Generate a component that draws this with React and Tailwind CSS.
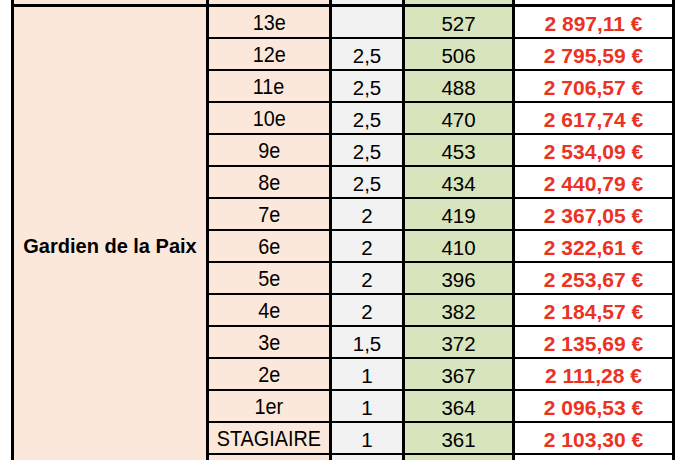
import React from "react";

const rows = [
  ["13e", "", "527", "2 897,11 €"],
  ["12e", "2,5", "506", "2 795,59 €"],
  ["11e", "2,5", "488", "2 706,57 €"],
  ["10e", "2,5", "470", "2 617,74 €"],
  ["9e", "2,5", "453", "2 534,09 €"],
  ["8e", "2,5", "434", "2 440,79 €"],
  ["7e", "2", "419", "2 367,05 €"],
  ["6e", "2", "410", "2 322,61 €"],
  ["5e", "2", "396", "2 253,67 €"],
  ["4e", "2", "382", "2 184,57 €"],
  ["3e", "1,5", "372", "2 135,69 €"],
  ["2e", "1", "367", "2 111,28 €"],
  ["1er", "1", "364", "2 096,53 €"],
  ["STAGIAIRE", "1", "361", "2 103,30 €"],
  ["", "", "", ""],
];

const cell = "h-[30px] flex items-end justify-center pb-[3px] leading-none";

function Row({ r }) {
  return (
    <>
      <div className={`${cell} bg-[#fce8da] text-[22px] text-black`}>
        <span className="inline-block scale-x-90">{r[0]}</span>
      </div>
      <div className={`${cell} bg-[#f2f2f2] text-[20.5px] text-black`}>{r[1]}</div>
      <div className={`${cell} bg-[#d8e4bc] text-[20.5px] text-black`}>{r[2]}</div>
      <div className={`${cell} bg-white text-[21px] font-bold text-[#eb3223]`}>{r[3]}</div>
    </>
  );
}

export default function App() {
  return (
    <div
      className="w-[676px] h-[460px] overflow-hidden bg-white"
      style={{ fontFamily: '"Liberation Sans", Arial, sans-serif' }}
    >
      <div className="ml-[11px] mt-[-26px] w-[664px] bg-black px-[3px] flex flex-col gap-[3px]">
        <div className="grid grid-cols-[192px_120px_70px_107px_157px] gap-x-[3px]">
          <div className="h-[30px] bg-[#fce8da]" />
          <div className="h-[30px] bg-[#fce8da]" />
          <div className="h-[30px] bg-[#f2f2f2]" />
          <div className="h-[30px] bg-[#d8e4bc]" />
          <div className="h-[30px] bg-white" />
        </div>
        <div className="grid grid-cols-[192px_120px_70px_107px_157px] gap-x-[3px] gap-y-[2px]">
          <div className="row-[span_15/span_15] bg-[#fce8da] flex items-center justify-center text-[20px] font-bold leading-none text-black">
            Gardien de la Paix
          </div>
          {rows.map((r, i) => (
            <Row key={i} r={r} />
          ))}
        </div>
      </div>
    </div>
  );
}
